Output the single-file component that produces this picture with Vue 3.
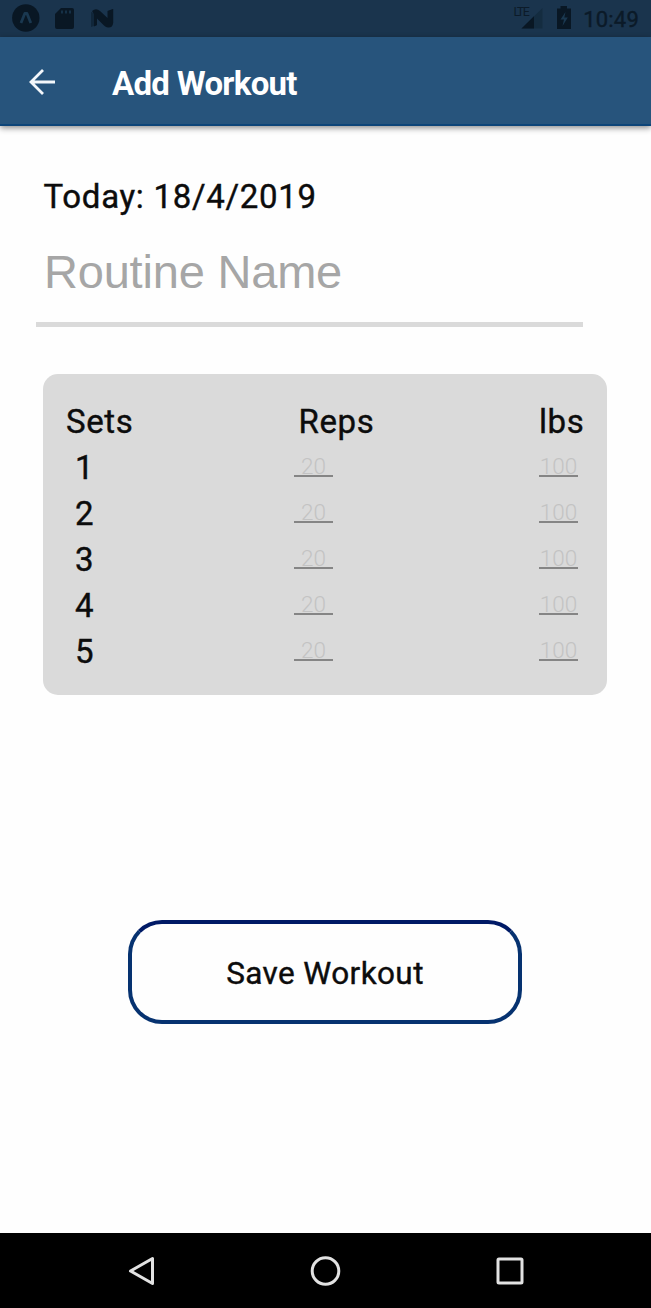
<script setup>
const sets = [1, 2, 3, 4, 5]
</script>

<template>
  <div class="screen">
    <div class="status">
      <svg class="status-left" width="120" height="37" viewBox="0 0 120 37">
        <circle cx="25.8" cy="18" r="13.7" fill="#091724" />
        <path d="M21 23 L24.8 13.500 H27 L30.800 23" fill="none" stroke="#1a3850" stroke-width="2.800" stroke-linejoin="round" />
        <path d="M61 8 H72 Q74 8 74 10 V27 Q74 29 72 29 H57 Q55 29 55 27 V14 Z" fill="#091724" />
        <path d="M62 10.500 V13.500 M66 10.500 V13.500 M70 10.500 V13.500" stroke="#1a3850" stroke-width="1.600" />
        <path d="M91 12 L97 14 V25 L91 27 Z M108 11 L113.500 9 V23 L108 25 Z" fill="#10263a" />
        <path d="M92 11 Q96 7.500 100 11 L107.500 18 V11 L113 9 V24 Q112 28 108 27.500 Q106 27.500 104 25.500 L97 18.500 V25 L94 26.500 V14 Z" fill="#091724" />
      </svg>
      <div class="status-right">
        <span class="lte">LTE</span>
        <svg width="70" height="37" viewBox="0 0 70 37">
          <path d="M8.500 28.500 L29.500 8 V28.500 Z" fill="#142c40" />
          <path d="M8.500 28.500 L21 16.300 V28.500 Z" fill="#091724" />
          <path d="M47.500 8.500 V6 H54 V8.500 H58 V29 H44 V8.500 Z" fill="#091724" />
          <path d="M52.500 12 L47.500 19.500 H51 L49.500 26 L54.800 17.500 H51.300 Z" fill="#1a3850" />
        </svg>
        <span class="clock">10:49</span>
      </div>
    </div>
    <header class="bar">
      <svg class="back" width="30" height="30" viewBox="0 0 30 30" fill="none" stroke="#f3f7fb" stroke-width="2.800">
        <path d="M28 15 H4 M16 3 L4 15 L16 27" />
      </svg>
      <h1 class="title">Add Workout</h1>
    </header>
    <main class="content">
      <div class="today"><span class="today-text">Today: 18/4/2019</span></div>
      <div class="routine"><span class="routine-text">Routine Name</span></div>
      <section class="card">
        <div class="row head">
          <span class="sets-head">Sets</span>
          <span class="reps-head">Reps</span>
          <span class="lbs-head">lbs</span>
        </div>
        <div v-for="n in sets" :key="n" class="row">
          <span class="num">{{ n }}</span>
          <span class="field reps">20</span>
          <span class="field lbs">100</span>
        </div>
      </section>
      <button class="save"><span class="save-text">Save Workout</span></button>
    </main>
    <nav class="nav">
      <svg width="30" height="32" viewBox="0 0 30 32" fill="none" stroke="#e2e2e2" stroke-width="3">
        <path d="M4.500 16 L26.500 3.500 V28.500 Z" stroke-linejoin="round" />
      </svg>
      <svg width="32" height="32" viewBox="0 0 32 32" fill="none" stroke="#e2e2e2" stroke-width="3">
        <circle cx="15.500" cy="16" r="13.300" />
      </svg>
      <svg width="30" height="32" viewBox="0 0 30 32" fill="none" stroke="#e2e2e2" stroke-width="3">
        <rect x="3" y="4" width="24" height="24" rx="1" />
      </svg>
    </nav>
  </div>
</template>

<style>
body { margin: 0; background: #fff; }
</style>

<style scoped>
.screen {
  width: 651px;
  height: 1308px;
  display: flex;
  flex-direction: column;
  background: #fefefe;
  font-family: Roboto, "Liberation Sans", sans-serif;
  color: #0c0c0c;
  overflow: hidden;
}
.status {
  height: 37px;
  flex: none;
  background: #1a344d;
  display: flex;
  justify-content: space-between;
}
.status-right { display: flex; height: 37px; padding-right: 12px; }
.lte {
  font-size: 12.500px;
  line-height: 14px;
  letter-spacing: -1.600px;
  margin: 5px -15px 0 0;
  color: #0c1b29;
}
.clock {
  font-size: 22px;
  line-height: 39px;
  letter-spacing: 0.2px;
  color: #0b1a28;
  -webkit-text-stroke: 0.4px #0b1a28;
}
.bar {
  height: 89px;
  flex: none;
  box-sizing: border-box;
  background: #27547c;
  border-bottom: 2px solid #0d4579;
  box-shadow: 0 2px 6px rgba(0, 0, 0, 0.45);
  display: flex;
  align-items: center;
  padding-left: 27px;
}
.back { margin-top: 2px; }
.title {
  margin: 7px 0 0 55px;
  font-size: 33px;
  line-height: 40px;
  font-weight: 700;
  letter-spacing: -0.7px;
  color: #fff;
  white-space: nowrap;
}
.content { flex: 1; display: flex; flex-direction: column; }
.today {
  margin: 51px 0 0 43.500px;
  font-size: 33px;
  line-height: 40px;
}
.today-text { letter-spacing: 0.7px; }
.today, .head, .num, .save { -webkit-text-stroke: 0.4px #0c0c0c; }
.routine {
  box-sizing: border-box;
  width: 547px;
  height: 91px;
  margin: 19px 0 0 36px;
  padding: 8px 0 0 8px;
  border-bottom: 5px solid #dadada;
  font-family: "Liberation Sans", sans-serif;
  font-size: 47px;
  line-height: 56px;
  letter-spacing: -0.2px;
  color: #a6a6a6;
}
.card {
  box-sizing: border-box;
  width: 564px;
  height: 321px;
  margin: 47px 0 0 43px;
  padding-top: 25px;
  border-radius: 15px;
  background: #dadada;
}
.row {
  display: grid;
  grid-template-columns: 251px 245px 1fr;
  height: 46px;
  line-height: 46px;
  font-size: 33px;
}
.head { letter-spacing: 0.6px; }
.sets-head { padding-left: 23px; }
.reps-head { padding-left: 4.500px; }
.num { padding-left: 32px; }
.field {
  box-sizing: border-box;
  width: 39px;
  height: 32px;
  border-bottom: 2px solid #858585;
  font-size: 22.500px;
  line-height: 43px;
  font-weight: 300;
  color: #c3c3c3;
  text-align: center;
}
.save {
  box-sizing: border-box;
  width: 394px;
  height: 104px;
  margin: 225px 0 0 128px;
  padding: 3px 0 0;
  border: 4px solid #063270;
  border-top-color: #001a66;
  border-radius: 34px;
  background: #fefefe;
  font-family: inherit;
  font-size: 31.500px;
  letter-spacing: 0.4px;
  color: #0c0c0c;
}
.nav {
  height: 75px;
  flex: none;
  background: #000;
  display: flex;
  justify-content: space-between;
  align-items: center;
  padding: 0 126px;
  margin-top: auto;
}
</style>
